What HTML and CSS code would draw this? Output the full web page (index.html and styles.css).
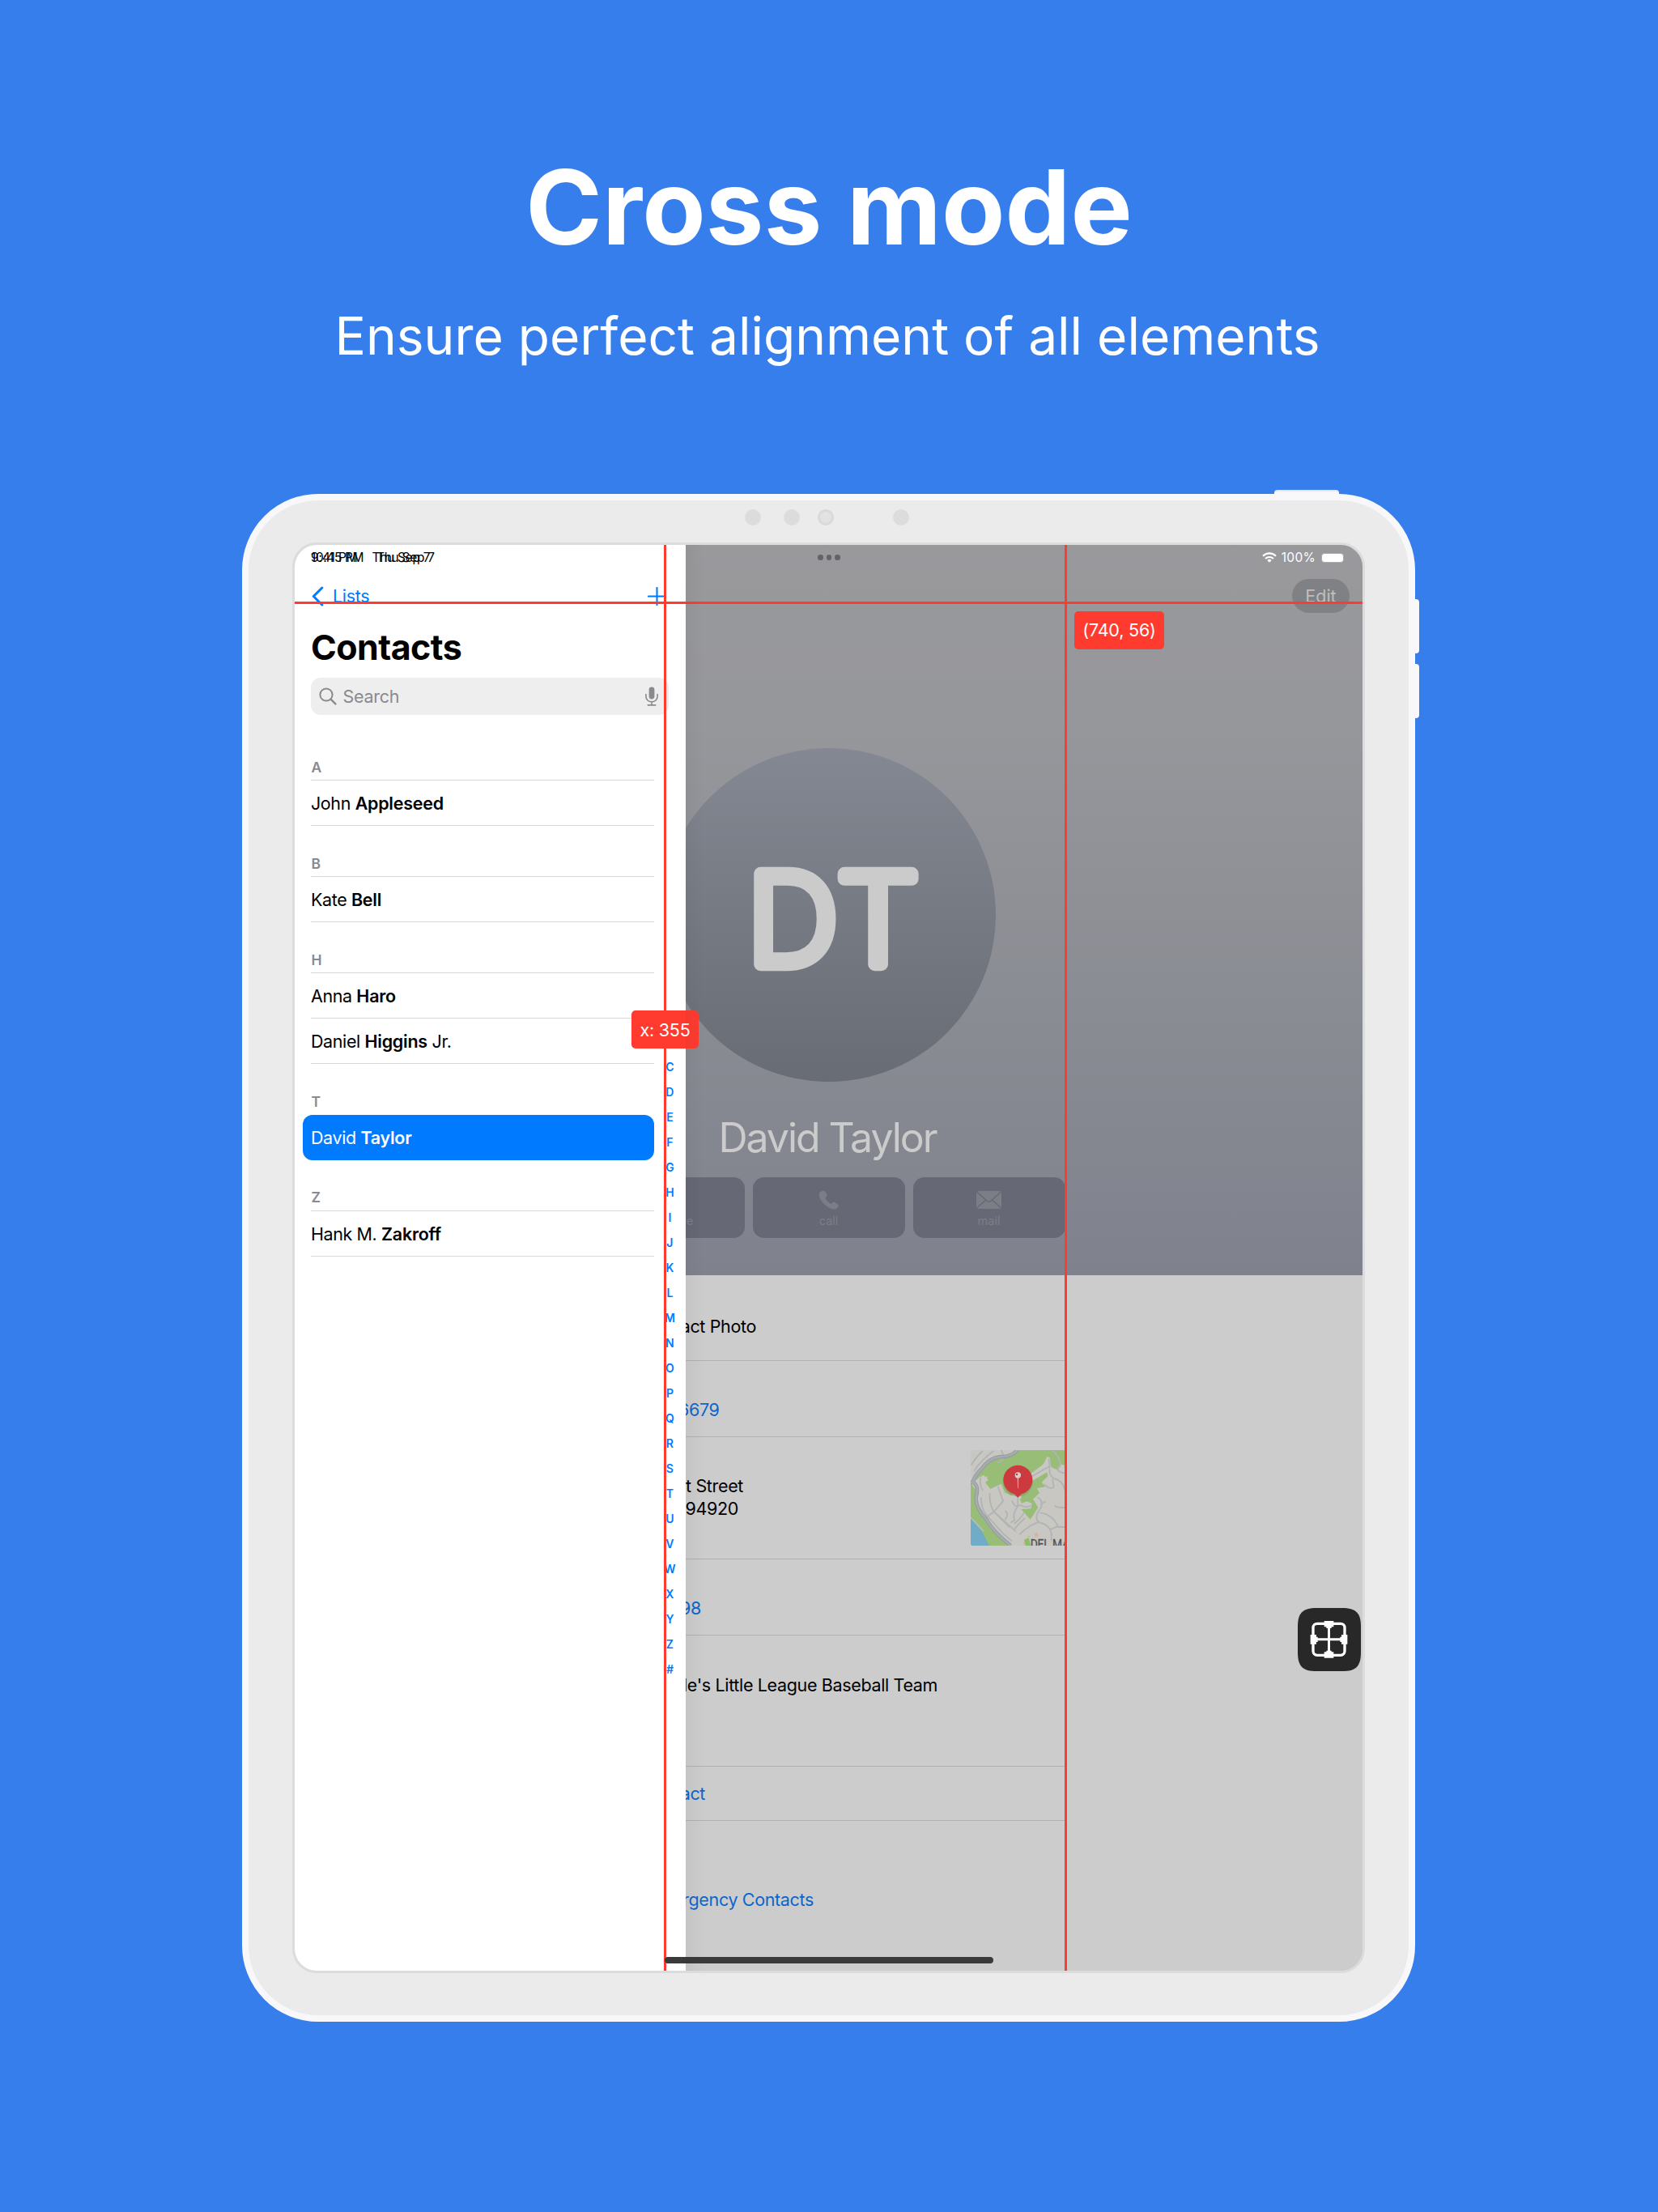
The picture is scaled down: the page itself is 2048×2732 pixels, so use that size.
FILE: index.html
```html
<!DOCTYPE html>
<html lang="en">
<head>
<meta charset="utf-8">
<title>Cross mode</title>
<link rel="stylesheet" href="styles.css">
</head>
<body>
<header class="promo">
  <h1 class="promo-title">Cross mode</h1>
  <p class="promo-sub">Ensure perfect alignment of all elements</p>
</header>

<main class="device">
  <span class="hw hw-power"></span>
  <span class="hw hw-up"></span>
  <span class="hw hw-down"></span>
  <div class="sensors"><i></i><i></i><i class="lens"></i><i></i></div>

  <div class="screen">
    <aside class="sidebar">
      <div class="status-left">
        <span class="clock"><span class="long">10:45 PM</span><span>Thu Sep 7</span></span>
        <span class="clock"><span class="short">9:41 PM</span><span>Thu Sep 7</span></span>
      </div>
      <nav class="side-nav">
        <a class="back">
          <svg width="15" height="25" viewBox="0 0 15 25"><path d="M12.8 2 2.3 12.5 12.8 23" fill="none" stroke="#007aff" stroke-width="3" stroke-linecap="round" stroke-linejoin="round"/></svg>
          <span>Lists</span>
        </a>
        <svg class="plus" width="23" height="23" viewBox="0 0 23 23"><path d="M11.5 1v21M1 11.5h21" fill="none" stroke="#007aff" stroke-width="2.1" stroke-linecap="round"/></svg>
      </nav>
      <h2 class="side-title">Contacts</h2>
      <div class="search">
        <svg width="22" height="22" viewBox="0 0 22 22"><circle cx="9" cy="9" r="7.6" fill="none" stroke="#8a8a8e" stroke-width="2"/><path d="M14.6 14.6 20.4 20.4" stroke="#8a8a8e" stroke-width="2.4" stroke-linecap="round"/></svg>
        <span>Search</span>
        <svg class="mic" width="16" height="24" viewBox="0 0 16 24"><rect x="4.6" y="0.5" width="6.8" height="15" rx="3.4" fill="#8a8a8e"/><path d="M.9 9.500v2.800a7.100 6.600 0 0 0 14.200 0V9.500M8 19v3.700M3.300 22.900h9.400" fill="none" stroke="#8a8a8e" stroke-width="1.600" stroke-linecap="round"/></svg>
      </div>
      <div class="side-body">
        <div class="list">
          <h3>A</h3>
          <p>John <b>Appleseed</b></p>
          <h3>B</h3>
          <p>Kate <b>Bell</b></p>
          <h3>H</h3>
          <p>Anna <b>Haro</b></p>
          <p>Daniel <b>Higgins</b> Jr.</p>
          <h3 class="bare">T</h3>
          <p class="active">David <b>Taylor</b></p>
          <h3>Z</h3>
          <p>Hank M. <b>Zakroff</b></p>
        </div>
        <div class="index">
          <span>C</span><span>D</span><span>E</span><span>F</span><span>G</span><span>H</span><span>I</span><span>J</span><span>K</span><span>L</span><span>M</span><span>N</span><span>O</span><span>P</span><span>Q</span><span>R</span><span>S</span><span>T</span><span>U</span><span>V</span><span>W</span><span>X</span><span>Y</span><span>Z</span><span>#</span>
        </div>
      </div>
    </aside>

    <section class="detail">
      <div class="hero">
        <div class="status-right">
          <span class="dots"><i></i><i></i><i></i></span>
          <svg class="wifi" width="18" height="13" viewBox="0 0 18 13"><g fill="none" stroke="#fff" stroke-width="2.200"><path d="M1 4.700a11.500 11.500 0 0 1 16 0"/><path d="M4 8a7.200 7.200 0 0 1 10 0"/></g><path d="M9 12.800 6.300 10.100a3.900 3.900 0 0 1 5.400 0z" fill="#fff"/></svg>
          <span class="percent">100%</span>
          <span class="battery"></span>
        </div>
        <div class="hero-nav"><span class="edit">Edit</span></div>
        <div class="profile">
          <div class="avatar">
            <svg width="230" height="160" viewBox="0 0 230 160"><g class="initials" text-anchor="middle"><text transform="translate(70 141) scale(1.010 1)">D</text><text transform="translate(175.500 141) scale(1.050 1)">T</text></g></svg>
          </div>
          <div class="name">David Taylor</div>
          <div class="actions">
            <div class="action"><span>message</span></div>
            <div class="action">
              <svg width="25" height="24" viewBox="0 0 25 24"><path d="M5.200.8c1-.6 2-.3 2.700.7l2.500 3.800c.6 1 .4 1.900-.4 2.700l-1 .9c-.6.6-.5 1.100-.1 1.800 1.300 2.200 3.500 4.400 5.800 5.700.7.400 1.200.4 1.700-.1l1-1c.8-.8 1.700-.9 2.700-.3l3.700 2.500c1 .7 1.200 1.700.5 2.700-1.300 2.100-3 3.200-5.200 3.200-3.800 0-8.400-2.800-12.400-6.700C3 12.800.4 8.800.6 5.400c.1-2 1.700-3.400 4.600-4.600z" fill="#7c7e87"/></svg>
              <span>call</span>
            </div>
            <div class="action">
              <svg width="31" height="24" viewBox="0 0 31 24"><rect x="0" y="1" width="31" height="22" rx="3.500" fill="#7c7e87"/><path d="M1 2.500 13.500 13.500q2 1.600 4 0L30 2.500M1 21.500 11.500 12M30 21.500 19.500 12" fill="none" stroke="#666875" stroke-width="1.500"/></svg>
              <span>mail</span>
            </div>
          </div>
        </div>
      </div>
      <div class="rows">
        <div class="row r1"><span class="val w1">act Photo</span></div>
        <div class="row r2"><span class="val w2 link">6679</span></div>
        <div class="row r3">
          <span class="val w3">t Street</span>
          <span class="val w3b">94920</span>
          <svg class="map" width="118" height="118" viewBox="177 93 354 354">
            <defs><clipPath id="mapClip"><rect x="177" y="93" width="354" height="354" rx="10"/></clipPath></defs>
            <g clip-path="url(#mapClip)">
              <rect x="177" y="93" width="354" height="354" fill="#c9c7c2"/>
              <path d="M352 93 330 112 258 130 215 165 195 205 240 190 232 214 250 237 290 218 303 250 340 268 352 262 366 290 385 283 404 290 400 310 364 312 398 350 427 305 408 275 432 252 422 235 455 228 440 212 463 190 460 175 405 207 400 180 440 150 470 120 475 155 500 168 512 145 531 152V93z" fill="#98bd76"/>
              <path d="M177 215 195 240 200 300 260 380 325 440V447H177z" fill="#98bd76"/>
              <path d="M177 345 220 395 245 447H177z" fill="#70abc8"/>
              <path d="M177 343 225 393" stroke="#b9bcba" stroke-width="5"/>
              <path d="M375 425 392 418 400 447H380z" fill="#8ebd68"/>
              <path d="M372 432l8 8-8 7zM412 402l10-4 6 12-10 8zM385 415l8-6 6 8z" fill="#d1b3a4"/>
              <path d="M215 193q-5 25 3 45l40 40M204 205l20-12 14 14M330 262l22 14 10-12M466 120l-20 40 20 10" fill="none" stroke="#c9c7c2" stroke-width="12"/>
              <g fill="none" stroke="#b0b4b6" stroke-width="5.500">
                <path d="M179 148Q200 115 222 96M190 170Q215 130 262 96M275 140Q300 135 298 112L290 93"/>
                <path d="M214 195Q208 220 222 242M216 268Q214 300 232 330L300 405 330 430M248 252Q245 290 262 320L322 380M278 228L297 282 262 322 232 345M262 320 345 395"/>
                <path d="M305 318Q320 330 304 352M352 262V300Q330 330 340 352L325 362M330 280Q340 310 362 297 385 310 400 297M375 325Q360 350 338 366M378 345Q355 365 340 385"/>
                <path d="M425 268Q450 285 435 310 410 345 430 360 470 370 476 400V430M455 283 435 295M434 325Q480 330 500 375L470 388M500 378H531M428 360Q395 370 358 405M488 297Q495 308 527 306"/>
                <path d="M405 190 470 152Q465 185 485 198 520 205 527 245M450 220Q470 240 485 230L480 200M470 150 466 125M480 95Q505 110 510 150 490 160 505 172L527 180"/>
              </g>
              <path d="M350 93Q330 118 285 118 245 122 215 165 190 190 186 212 208 225 198 262 190 300 235 350 260 395 325 447M177 213H188" fill="none" stroke="#959b9f" stroke-width="14"/>
              <path d="M350 93Q330 118 285 118 245 122 215 165 190 190 186 212 208 225 198 262 190 300 235 350 260 395 325 447M177 213H188" fill="none" stroke="#a7acae" stroke-width="8"/>
              <text x="398" y="458" textLength="170" lengthAdjust="spacingAndGlyphs" class="map-label">DEL MAR</text>
            </g>
            <ellipse cx="352" cy="208" rx="56" ry="57" fill="#5a6b48" opacity=".25"/>
            <path d="M338 254 352 269 366 254z" fill="#cc3a40"/>
            <circle cx="352" cy="203.500" r="54" fill="#cc3a40"/>
            <path d="M350.400 196h3.200l-.6 37q-1 3-2 0z" fill="#d6d0d0"/>
            <circle cx="352" cy="186" r="11" fill="#d6d0d0"/><circle cx="348" cy="183" r="3.800" fill="#cc3a40"/>
          </svg>
        </div>
        <div class="row r4"><span class="val w4 link">98</span></div>
        <div class="row r5"><span class="val w5">le's Little League Baseball Team</span></div>
        <div class="row r6"><span class="val w6 link">act</span></div>
        <div class="row r7"><span class="val w7 link">rgency Contacts</span></div>
      </div>
    </section>

    <div class="guide guide-x1"></div>
    <div class="guide guide-x2"></div>
    <div class="guide guide-y"></div>
    <div class="tag tag-x">x: 355</div>
    <div class="tag tag-xy">(740, 56)</div>
    <div class="home-bar"></div>
    <div class="tool">
      <svg width="78" height="78" viewBox="0 0 234 234"><path d="M70 0h94c52 0 70 18 70 70v94c0 52-18 70-70 70H70c-52 0-70-18-70-70V70C0 18 18 0 70 0z" fill="#282828"/>
        <rect x="57" y="58" width="117" height="117" rx="15" fill="none" stroke="#fff" stroke-width="10"/>
        <path d="M115.500 58v117M57 116.500h117" stroke="#fff" stroke-width="9"/>
        <path d="M98 48h35v22h-8v5h-19v-5h-8zM98 185h35v-22h-8v-5h-19v5h-8zM47 99v35h22v-8h5v-19h-5v-8zM184 99v35h-22v-8h-5v-19h5v-8z" fill="#fff"/></svg>
    </div>
  </div>
</main>
</body>
</html>
```
FILE: styles.css
```css
* { box-sizing: border-box; margin: 0; padding: 0; }
body {
  width: 2048px;
  height: 2732px;
  overflow: hidden;
  background: #377eed;
  font-family: Inter, "Liberation Sans", sans-serif;
  color: #000;
}
svg { display: block; flex: none; }
i { display: block; }

/* heading */
.promo { height: 610px; padding-top: 178px; text-align: center; color: #fff; }
.promo-title { font-size: 128px; line-height: 156px; font-weight: 700; letter-spacing: .15px; }
.promo-sub { margin-top: 41px; padding-right: 4px; font-size: 64px; line-height: 79px; font-weight: 400; }

/* tablet shell */
.device {
  position: relative;
  width: 1449px;
  height: 1887px;
  margin: 0 0 0 299px;
  border: 8px solid #f8f8fb;
  border-radius: 94px;
  background: #ebebeb;
  padding: 52px 54px;
}
.hw { position: absolute; background: #f8f8fb; }
.hw-power { left: 1267px; top: -13px; width: 80px; height: 5px; border-radius: 4px 4px 0 0; background: linear-gradient(#dcdde2, #f8f8fb 60%); }
.hw-up, .hw-down { left: 1441px; width: 5px; height: 67px; border-radius: 0 4px 4px 0; }
.hw-up { top: 122px; }
.hw-down { top: 202px; }
.sensors { position: absolute; left: 613px; top: 11px; display: flex; }
.sensors i { width: 20px; height: 20px; border-radius: 50%; background: #dcdcdc; }
.sensors i:nth-child(2) { margin-left: 27.500px; }
.sensors i:nth-child(3) { margin-left: 22.500px; }
.sensors i:nth-child(4) { margin-left: 73px; }
.sensors .lens { background: #e2e2e2; border: 3px solid #d9d9d9; }

.screen {
  position: relative;
  width: 1325px;
  height: 1767px;
  display: flex;
  border: 3px solid #dcdcdc;
  border-radius: 30px;
  overflow: hidden;
  background: #ccc;
}

/* contacts sidebar */
.sidebar { width: 483px; flex: none; background: #fff; }
.status-left { display: grid; height: 31px; padding: 1px 0 0 20px; align-items: center; }
.clock { grid-area: 1 / 1; display: flex; font-size: 15.500px; line-height: 20px; letter-spacing: -.3px; white-space: nowrap; }
.clock .long { width: 81px; letter-spacing: -.4px; }
.clock .short { width: 75.500px; letter-spacing: -.1px; }
.side-nav { display: flex; align-items: center; justify-content: space-between; height: 48px; margin-top: 8px; padding: 0 24px 0 21px; color: #007aff; }
.back { display: flex; align-items: center; gap: 11px; font-size: 21.500px; line-height: 28px; letter-spacing: -.3px; }
.side-title { margin: 15px 0 0 20px; font-size: 43px; line-height: 48px; font-weight: 700; letter-spacing: -.55px; }
.search {
  display: flex;
  align-items: center;
  width: 442px;
  height: 46px;
  margin: 14px 0 0 20px;
  padding: 0 13px 0 10px;
  border-radius: 12px;
  background: #eeeeef;
  color: #8a8a8e;
  font-size: 21.500px;
  letter-spacing: -.3px;
}
.search span { margin-left: 7.500px; }
.mic { margin-left: auto; }
.side-body { display: flex; }
.list { width: 424px; margin: 18.700px 0 0 20px; }
.list h3 {
  display: flex;
  align-items: flex-end;
  height: 62.800px;
  padding: 0 0 6.500px .5px;
  border-bottom: 1px solid #d8d8da;
  color: #8a8a8e;
  font-size: 17.500px;
  line-height: 18px;
  font-weight: 600;
}
.list .bare { border-bottom: 0; padding-bottom: 7px; }
.list p {
  height: 56px;
  border-bottom: 1px solid #d8d8da;
  font-size: 21.500px;
  line-height: 56px;
  letter-spacing: -.4px;
  white-space: nowrap;
}
.list b { font-weight: 600; letter-spacing: -.25px; }
.list .active { margin-left: -10px; padding-left: 10px; border: 0; border-radius: 12px; background: #007aff; color: #fff; line-height: 57px; }
.index { width: 20px; margin-left: 9.400px; padding-top: 419.400px; }
.index span { display: block; height: 30.980px; line-height: 31px; text-align: center; color: #007aff; font-size: 14px; font-weight: 600; }

/* contact detail */
.detail { position: relative; width: 837px; flex: none; overflow: hidden; background: #ccc; }
.detail::before { content: ""; position: absolute; left: 0; top: 0; z-index: 1; width: 22px; height: 100%; background: linear-gradient(90deg, rgba(0,0,0,.04), rgba(0,0,0,0)); }
.hero { height: 902px; background: linear-gradient(#99999c, #96979b 25%, #8b8d94 60%, #7f828d); }
.status-right { display: flex; align-items: center; height: 31px; padding: 0 24px 0 163px; }
.dots { display: flex; gap: 4px; margin-right: auto; }
.dots i { width: 6.500px; height: 6.500px; border-radius: 50%; background: #646468; }
.percent { margin: 0 7px 0 6px; color: #fff; font-size: 15.500px; line-height: 20px; letter-spacing: .3px; }
.battery { width: 28px; height: 12px; padding: 1px; border-radius: 4px; background: #fff; border: 1px solid #a9a9ac; }
.hero-nav { display: flex; justify-content: flex-end; padding: 11px 17px 0 0; }
.edit { width: 71px; height: 42px; border-radius: 21px; background: #808184; color: #bebec0; text-align: center; font-size: 21.500px; line-height: 42px; }
.profile { display: flex; flex-direction: column; align-items: center; width: 353px; margin-top: 166.500px; }
.avatar { display: flex; flex: none; align-items: center; justify-content: center; width: 412.500px; height: 412.500px; border-radius: 50%; background: linear-gradient(#848892, #686c74); }
.initials { font-size: 154px; font-weight: 200; fill: #cbcbcb; stroke: #cbcbcb; stroke-width: 16.500px; stroke-linejoin: round; }
.name { margin-top: 43.500px; padding-right: 3px; color: #cbcbcb; font-size: 50px; line-height: 50px; letter-spacing: -2.050px; white-space: nowrap; }
.actions { display: flex; gap: 10px; margin-top: 24px; }
.action { display: flex; flex-direction: column; align-items: center; width: 188px; height: 75.500px; padding-top: 16px; border-radius: 14px; background: #666875; color: #7c7e87; }
.action span { margin-top: 5px; font-size: 14.500px; line-height: 18px; }
.action span:first-child { margin-top: 29px; }
.rows { width: 469px; }
.row { position: relative; border-bottom: 1px solid #b0b0b2; font-size: 21.500px; line-height: 29px; letter-spacing: -.35px; }
.val { display: flex; justify-content: flex-end; white-space: nowrap; }
.link { color: #0a66cc; }
.r1 { height: 106px; padding-top: 49px; }
.r2 { height: 94px; padding-top: 45.500px; }
.r3 { height: 151px; padding-top: 45.500px; line-height: 28.700px; }
.r4 { height: 94px; padding-top: 46px; }
.r5 { height: 162px; padding-top: 46.500px; }
.r6 { height: 67px; padding-top: 18.500px; }
.r7 { padding-top: 82.500px; border: 0; }
.w1 { width: 87px; }
.w2 { width: 41.500px; }
.w3 { width: 71px; }
.w3b { width: 65px; }
.w4 { width: 19px; }
.w5 { width: 311px; }
.w6 { width: 24px; }
.w7 { width: 158px; }
.map { position: absolute; left: 352px; top: 16px; }
.map-label { font-family: Roboto, "Liberation Sans", sans-serif; font-size: 49px; fill: #505255; stroke: #505255; stroke-width: 1px; }

/* measuring overlay */
.guide { position: absolute; background: #ff3b30; }
.guide-x1, .guide-x2 { top: 0; bottom: 0; width: 2.500px; }
.guide-x1 { left: 456px; }
.guide-x2 { left: 951.400px; }
.guide-y { left: 0; right: 0; top: 70px; height: 3px; }
.tag { position: absolute; height: 47px; border-radius: 5px; background: #ff3b30; color: #fff; text-align: center; font-size: 21.500px; line-height: 47px; letter-spacing: -.2px; white-space: nowrap; }
.tag-x { left: 416px; top: 575px; width: 83px; line-height: 48px; }
.tag-xy { left: 963px; top: 82px; width: 111px; }
.home-bar { position: absolute; left: 457px; top: 1744px; width: 406px; height: 8px; border-radius: 4px; background: #3a3a3a; }
.tool { position: absolute; left: 1239px; top: 1313px; }
```
